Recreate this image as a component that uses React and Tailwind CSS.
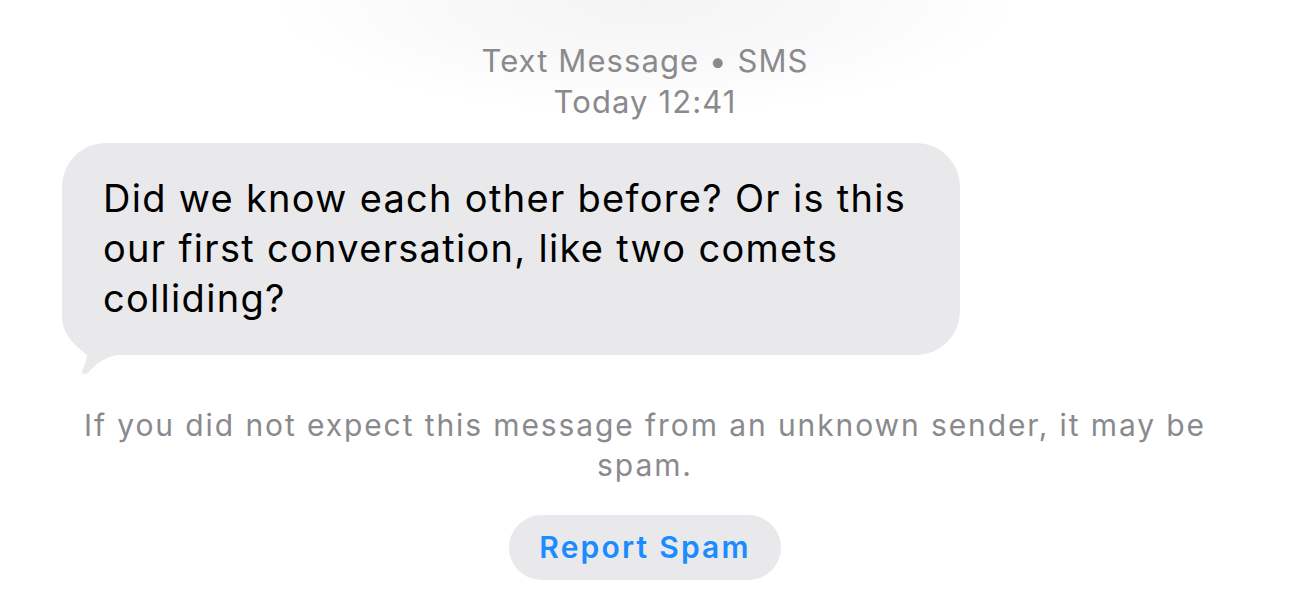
import React from 'react';

const font = { fontFamily: 'Inter, "Noto Sans", sans-serif' };

const Bubble = ({ children }) => (
  <div className="relative ml-[62px] w-[898px]">
    {/* tail, painted under the bubble */}
    <svg className="absolute left-0 bottom-[-20px]" width="80" height="75" viewBox="0 0 80 75">
      <path
        d="M0 0 L0 20 C2 35 12 45 25 55 C24 62 22 67 20 71 C19 74 23 75 26 73 C32 66 40 58 55 55 L80 55 L80 0 Z"
        fill="#e9e9eb"
      />
    </svg>
    <div className="relative rounded-[44px] bg-[#e9e9eb] pl-[41px] pr-[40px] pt-[30px] pb-[32px] text-[38px] leading-[50px] tracking-[1.3px] text-black">
      {children}
    </div>
  </div>
);

export default function App() {
  return (
    <div className="relative h-[616px] w-[1290px] overflow-hidden bg-white" style={font}>
      <div className="flex h-[130px] flex-col items-center bg-[radial-gradient(ellipse_370px_115px_at_645px_0px,#f4f4f4_0%,#f9f9f9_55%,#ffffff_100%)] pt-[40px] text-[31px] leading-[41px] tracking-[1.1px] text-[#8a8a8e]">
        <div>Text Message • SMS</div>
        <div>Today 12:41</div>
      </div>
      <div className="mt-[13px]">
        <Bubble>
          Did we know each other before? Or is this our first conversation, like two comets colliding?
        </Bubble>
      </div>
      <div className="mx-auto mt-[50px] w-[1180px] text-center text-[30px] leading-[40px] tracking-[1.9px] text-[#8a8a8e]">
        If you did not expect this message from an unknown sender, it may be spam.
      </div>
      <div className="mt-[30px] flex justify-center">
        <button className="h-[65px] w-[272px] rounded-full bg-[#e9e9eb] text-[30px] font-semibold tracking-[2.2px] text-[#1a8cff]">
          Report Spam
        </button>
      </div>
    </div>
  );
}
